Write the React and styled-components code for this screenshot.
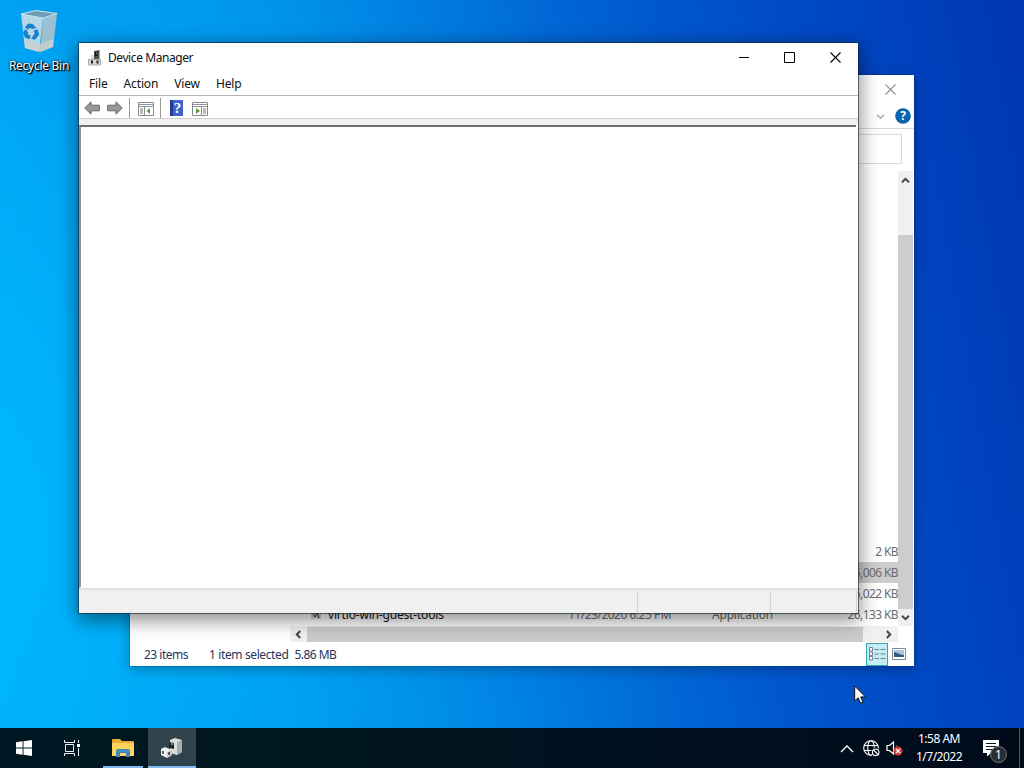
import React from 'react';
import styled, { createGlobalStyle } from 'styled-components';

const Global = createGlobalStyle`
  * { box-sizing: border-box; }
  body { margin: 0; overflow: hidden; font: 12px/16px "Noto Sans", "Open Sans", sans-serif; color: #111; }
  svg { display: block; flex: none; }
`;

const Desktop = styled.main`
  position: relative;
  width: 1024px;
  height: 768px;
  overflow: hidden;
  display: flex;
  flex-direction: column;
  justify-content: space-between;
  background:
    radial-gradient(ellipse 440px 540px at -40px 520px, rgba(0, 186, 255, .9), rgba(0, 180, 255, 0) 100%),
    linear-gradient(80deg, #00adf7 0%, #009ff1 14%, #009cf0 26%, #0095ec 35%, #007fe1 47%, #0067d5 59%, #0056cc 69%, #0045c1 85%, #0036b1 100%);
`;

const DesktopIcon = styled.div`
  width: 78px;
  padding-top: 8px;
  display: flex;
  flex-direction: column;
  align-items: center;
  gap: 4px;
`;

const IconLabel = styled.span`
  color: #fff;
  font-size: 12px;
  letter-spacing: -.27px;
  white-space: nowrap;
  text-shadow: 0 0 2px #000, 1px 1px 2px #000, 1px 1px 1px #000;
`;

const Window = styled.section`
  position: absolute;
  left: ${p => p.$x}px;
  top: ${p => p.$y}px;
  width: ${p => p.$w}px;
  height: ${p => p.$h}px;
  display: flex;
  flex-direction: column;
  background: #fff;
  box-shadow: ${p => p.$active ? '0 0 0 1px rgba(20,35,50,.62), 0 5px 18px 2px rgba(0,0,0,.46)' : '0 0 0 1px rgba(0,50,110,.25), 0 3px 12px rgba(0,0,0,.3)'};
`;

const TitleBar = styled.header`
  height: 30px;
  display: flex;
  align-items: flex-start;
  padding: 7px 0 0 8px;
  flex: none;
`;

const Title = styled.h1`
  flex: 1;
  margin: 0 0 0 5px;
  font-size: 12px;
  font-weight: 400;
  letter-spacing: -.42px;
`;

const CaptionButton = styled.span`
  width: ${p => p.$w || 46}px;
  height: ${p => p.$h || 15}px;
  padding-right: 1px;
  display: flex;
  align-items: center;
  justify-content: center;
`;

const CaptionGroup = styled.div`
  display: flex;
  margin-right: -1px;
`;

const MenuBar = styled.nav`
  height: 23px;
  flex: none;
  display: flex;
  padding: 3px 0 0 10px;
  gap: 16px;
  letter-spacing: -.15px;
  border-bottom: 1px solid #b4b4b4;
`;

const ToolBar = styled.div`
  height: 23px;
  flex: none;
  display: flex;
  align-items: center;
  padding: 2px 0 0 5px;
  border-bottom: 1px solid #cfcfcf;
`;

const Tool = styled.span`
  margin-right: ${p => p.$gap}px;
  padding-top: ${p => p.$drop || 0}px;
`;

const ToolRule = styled.span`
  width: 1px;
  height: 20px;
  margin-right: ${p => p.$gap}px;
  background: #9a9a9a;
`;

const Gutter = styled.div`
  height: 6px;
  flex: none;
  background: #f0f0f0;
`;

const Pane = styled.div`
  flex: 1;
  margin-right: 2px;
  border-top: 2px solid #6e6e6e;
  border-left: 2px solid #929292;
  border-bottom: 1px solid #fff;
  background: #fff;
`;

const PaneStatus = styled.footer`
  height: 25px;
  flex: none;
  display: flex;
  padding-top: 1px;
  background: #f0f0f0;
  border-top: 2px solid #e2e2e2;
`;

const StatusCell = styled.span`
  width: ${p => p.$w}px;
  border-right: 1px solid #d5d5d5;
`;

const ExplorerTitle = styled.header`
  height: 29px;
  flex: none;
  display: flex;
  justify-content: flex-end;
`;

const Ribbon = styled.div`
  height: 25px;
  flex: none;
  display: flex;
  align-items: center;
  justify-content: flex-end;
  gap: 10px;
  padding-right: 3px;
  border-bottom: 1px solid #d9d9d9;
`;

const SearchRow = styled.div`
  height: 42px;
  flex: none;
  display: flex;
  justify-content: flex-end;
  padding: 5px 12px 7px 0;
`;

const SearchBox = styled.span`
  width: 180px;
  height: 30px;
  border: 1px solid #d9d9d9;
`;

const Browser = styled.div`
  height: 471px;
  flex: none;
  display: flex;
`;

const TreePane = styled.aside`
  width: 160px;
  flex: none;
`;

const Listing = styled.div`
  flex: 1;
  min-width: 0;
  display: flex;
  flex-direction: column;
`;

const ListArea = styled.div`
  height: 455px;
  flex: none;
  display: flex;
`;

const Files = styled.div`
  flex: 1;
  display: flex;
  flex-direction: column;
  justify-content: flex-end;
  padding-bottom: 1px;
`;

const FileRow = styled.div`
  height: 21px;
  flex: none;
  display: grid;
  grid-template-columns: 20px 18px 240px 144px 119px 1fr;
  align-items: center;
  color: #6d6d6d;
  letter-spacing: -.5px;
  background: ${p => (p.$selected ? '#cdcdcd' : 'transparent')};
  white-space: nowrap;
`;

const FileName = styled.span`
  color: #111;
  letter-spacing: -.18px;
`;

const FileType = styled.span`
  letter-spacing: -.2px;
`;

const FileSize = styled.span`
  text-align: right;
  letter-spacing: -.6px;
`;

const VScroll = styled.div`
  width: 15px;
  margin-right: 1px;
  display: flex;
  flex-direction: column;
  align-items: center;
  background: #f0f0f0;
  padding-top: 5px;
`;

const VThumb = styled.span`
  width: 15px;
  height: 374px;
  margin: 50px 0 4px;
  background: #cdcdcd;
`;

const HScroll = styled.div`
  height: 16px;
  width: 608px;
  display: flex;
  align-items: center;
  padding-left: 4px;
  background: #f0f0f0;
`;

const HThumb = styled.span`
  width: 556px;
  height: 15px;
  margin: 0 21px 0 4px;
  background: #cbcbcb;
`;

const InfoBar = styled.footer`
  height: 24px;
  flex: none;
  display: flex;
  align-items: center;
  padding-left: 14px;
  color: #26365c;
`;

const Info = styled.span`
  margin-right: ${p => p.$gap}px;
  padding-top: 1px;
  white-space: nowrap;
  letter-spacing: ${p => p.$track}px;
`;

const ViewButtons = styled.span`
  margin-left: auto;
  display: flex;
  align-items: center;
  gap: 3px;
  padding-right: 8px;
`;

const ViewButton = styled.span`
  width: ${p => (p.$on ? 22 : 15)}px;
  height: ${p => (p.$on ? 23 : 13)}px;
  display: flex;
  align-items: center;
  justify-content: center;
  background: ${p => (p.$on ? '#c5ecf4' : 'none')};
  border: ${p => (p.$on ? '1px solid #35a5b3' : 0)};
`;

const TaskBar = styled.footer`
  height: 40px;
  display: flex;
  color: #fff;
  background: linear-gradient(90deg, #001823 0%, #00161f 35%, #000f1f 70%, #000b1a 100%);
`;

const Task = styled.span`
  width: ${p => p.$w || 48}px;
  margin-right: ${p => p.$gap || 0}px;
  padding: ${p => (p.$open ? 2 : 0)}px ${p => p.$nudge || 0}px 0 0;
  display: flex;
  align-items: center;
  justify-content: center;
  background: ${p => (p.$active ? '#2f434d' : 'none')};
  border-bottom: ${p => (p.$open ? '2px solid #80b9ed' : 0)};
`;

const Tray = styled.div`
  margin-left: auto;
  display: flex;
  align-items: center;
`;

const TrayItem = styled.span`
  margin-right: ${p => p.$gap}px;
`;

const Clock = styled.time`
  width: 56px;
  font-size: 12px;
  line-height: 18px;
  letter-spacing: -.5px;
  text-align: center;
  white-space: nowrap;
  margin-right: 16px;
  padding-bottom: 1px;
`;

const NoticeIcon = styled.span`
  position: relative;
  width: 26px;
  height: 24px;
  padding-top: 4px;
  margin-right: 10px;
`;

const Badge = styled.span`
  position: absolute;
  left: 7px;
  top: 10px;
  width: 17px;
  height: 17px;
  border-radius: 50%;
  border: 1px solid #74777a;
  background: #2b2e31;
  text-align: center;
  font-size: 12px;
  line-height: 15px;
`;

const DesktopEdge = styled.span`
  width: 5px;
  height: 40px;
  border-left: 1px solid #4a5663;
`;

const Pointer = styled.span`
  position: absolute;
  left: 854px;
  top: 685px;
`;

const BinIcon = () => (
  <svg width="40" height="46" viewBox="0 0 40 46">
    <path d="M2 6 24 10 20 44 6 40Z" fill="#b6d7e6" />
    <path d="M24 10 38 6 34 39 21 44Z" fill="#9cc0d2" />
    <path d="M2 6 17 2.500 38 5.500 24 10Z" fill="#6f9db5" stroke="#cfe6f0" strokeWidth="1" />
    <path d="M5 32 20 36 35 31 34 39 21 44 6 40Z" fill="#cfcfcc" opacity=".75" />
    <g transform="translate(-1 -2)">
      <g fill="none" stroke="#167fce" strokeWidth="4" strokeLinejoin="round">
        <path d="M8.500 22.500 11 19.500 15 20.500" /><path d="m17.500 24 1.500 4-3 4" /><path d="M12 31.500 8.500 30 7 26" />
      </g>
      <g fill="#167fce"><path d="m13.500 17.500 5 4.500-5 1Z" /><path d="m17 28.500-4 4 4 1.500Z" /><path d="m4.500 27 3-4 3 4Z" /></g>
    </g>
  </svg>
);

const DeviceIcon = () => (
  <svg width="16" height="16" viewBox="0 0 16 16">
    <path d="M7 1 12.500 0v9H7Z" fill="#505050" /><path d="M8 2h2.500v4H8Z" fill="#111" /><path d="M9 3h1v1H9Z" fill="#93ad94" />
    <path d="M4 5h3v5H4Z" fill="#ddd" />
    <path d="M1.500 9.500h12v5.500h-12Z" fill="#d6d6d6" stroke="#999" strokeWidth=".8" />
    <path d="M4 10.500h2v3H4ZM9.500 10.500h2v3h-2Z" fill="#222" />
  </svg>
);

const Arrow = ({ flip }) => (
  <svg width="16" height="14" viewBox="0 0 16 14">
    <path transform={flip ? 'translate(16 0) scale(-1 1)' : undefined} d="M.7 7 7 .8v3.400h8.300v5.600H7v3.400Z" fill="#989898" stroke="#686868" />
  </svg>
);

const PanelIcon = ({ right }) => (
  <svg width="16" height="14" viewBox="0 0 16 14">
    <path d="M.5.500h15v13H.5Z" fill="#fff" stroke="#858b91" />
    <path d="M1 2.500h14M1 4.500h14" stroke="#9298a0" />
    <path d={right ? 'M9.500 5v8' : 'M6.500 5v8'} stroke="#8b9096" />
    <path d={right ? 'M11 7h3M11 9h3M11 11h3' : 'M2 7h3M2 9h3M2 11h3'} stroke="#777" />
    <path d={right ? 'm4 6 4 3-4 3Z' : 'M12 6 8.500 9l3.500 3Z'} fill="#5b9f42" />
  </svg>
);

const HelpBook = () => (
  <svg width="13" height="16" viewBox="0 0 13 16">
    <path d="M0 0h13v16H0Z" fill="#3f63c8" /><path d="M0 0h3v16H0Z" fill="#263b98" />
    <text x="7.500" y="13" textAnchor="middle" fill="#fff" fontSize="15" fontFamily="Liberation Serif" fontWeight="700">?</text>
  </svg>
);

const HelpCircle = () => (
  <svg width="16" height="16" viewBox="0 0 16 16">
    <circle cx="8" cy="8" r="7.800" fill="#0865ad" />
    <text x="8" y="12.300" textAnchor="middle" fill="#fff" fontSize="12" fontFamily="Noto Sans" fontWeight="700">?</text>
  </svg>
);

const Cross = ({ color }) => <svg width="11" height="11" viewBox="0 0 11 11"><path d="m.5.500 10 10m0-10-10 10" stroke={color} strokeWidth="1.100" /></svg>;

const turns = { up: 0, right: 90, down: 180, left: 270 };
const Chevron = ({ dir, color = '#444', thin }) => (
  <svg width="9" height="9" viewBox="0 0 9 9">
    <path transform={`rotate(${turns[dir]} 4.500 4.500)`} d="m1 6.200 3.500-3.400L8 6.200" fill="none" stroke={color} strokeWidth={thin ? 1.4 : 2} />
  </svg>
);

const InstallerIcon = () => (
  <svg width="12" height="14" viewBox="0 0 12 14"><path d="M1 4h10v7H1Z" fill="#d5d5cd" /><path d="m3 6 2 3 2-4 2 5" fill="none" stroke="#292929" /></svg>
);

const DetailsIcon = () => (
  <svg width="17" height="14" viewBox="0 0 17 14" fill="none" stroke="#71828f">
    <path d="M.5.500h3v3.500h-3ZM.5 5h3v3.500h-3ZM.5 9.500h3V13h-3Z" fill="#f7ffff" /><path d="M5.500 2.500h4.500m1.500 0h5M5.500 7H10m1.500 0h5M5.500 11.500H10m1.500 0h5" />
  </svg>
);

const PreviewIcon = () => (
  <svg width="14" height="12" viewBox="0 0 14 12"><path d="M.5.500h13v11H.5Z" fill="#fff" stroke="#7c8a98" /><path d="M2 2h10v7H2Z" fill="#a8c6e3" /><path d="M2 4c3 0 5 3 10 3v2H2Z" fill="#385a7a" /></svg>
);

const StartIcon = () => (
  <svg width="16" height="16" viewBox="0 0 16 16" fill="#fff"><path d="M0 2.300 6.600 1.300v6.300H0ZM7.500 1.200 16 0v7.600H7.500ZM0 8.500h6.600v6.300L0 13.800ZM7.500 8.500H16V16l-8.500-1.200Z" /></svg>
);

const TaskViewIcon = () => (
  <svg width="17" height="16" viewBox="0 0 17 16" fill="none" stroke="#eef4f6">
    <path d="M2.500 4.500h8v7h-8ZM1.500 0v2.500h10V0M1.500 16v-2.500h10V16M15.500 0v3M15.500 8v8" /><path d="M14 4h3v3h-3Z" fill="#fff" stroke="none" />
  </svg>
);

const FolderIcon = () => (
  <svg width="22" height="18" viewBox="0 0 22 18">
    <path d="M0 1q0-1 1-1h7l2 2h11l1 1v14H0Z" fill="#e9ad35" /><path d="M0 4h22v13H0Z" fill="#ffd45e" />
    <path d="M4 18v-6q0-2 2-2h10q2 0 2 2v6h-4v-4H8v4Z" fill="#3c86b9" /><path d="M4 12h14" stroke="#509bc9" />
  </svg>
);

const DeviceTaskIcon = () => (
  <svg width="24" height="22" viewBox="0 0 24 22">
    <path d="m10 3 5-2 7 2v12l-5 3-7-2Z" fill="#dadcdd" /><path d="m17 5 5-2v12l-5 3Z" fill="#a8adb0" />
    <path d="m9 5 5 1v6l-5-1Z" fill="#202729" /><path d="M11 6h2v2h-2Z" fill="#6f9b79" />
    <path d="m1 12 4-2 7 3v5l-5 3-6-3Z" fill="#eeeeee" /><path d="m7 15 5-2v5l-5 3Z" fill="#c2c6c8" /><path d="M3 14v3M9 15v3" stroke="#333" strokeWidth="1.500" />
  </svg>
);

const GlobeIcon = () => (
  <svg width="17" height="17" viewBox="0 0 17 17" fill="none" stroke="#fff" strokeWidth="1.100">
    <circle cx="8" cy="8" r="7.300" /><ellipse cx="8" cy="8" rx="3.300" ry="7.300" /><path d="M1 5.500h14M1 10.500h14" />
    <circle cx="12.700" cy="12.300" r="4.700" fill="#000f1f" stroke="none" /><circle cx="12.700" cy="12.300" r="3.300" /><path d="m10.500 10 4.500 4.500" />
  </svg>
);

const MutedIcon = () => (
  <svg width="17" height="16" viewBox="0 0 17 16">
    <path d="M1 5.500h2.500L7.500 2v12l-4-3.500H1Z" fill="none" stroke="#fff" strokeWidth="1.200" /><path d="M10 5q1 1 1 3" stroke="#777" fill="none" />
    <circle cx="12" cy="11" r="4.500" fill="#d33b3b" /><path d="m10 9 4 4m0-4-4 4" stroke="#fff" strokeWidth="1.200" />
  </svg>
);

const MessageIcon = () => (
  <svg width="17" height="17" viewBox="0 0 17 17"><path d="M0 0h16v13H8l-4 3.500V13H0Z" fill="#fff" /><path d="M3 3.500h10M3 6.500h10M3 9.500h7" stroke="#07131f" /></svg>
);

const PointerIcon = () => (
  <svg width="12" height="20" viewBox="0 0 12 20"><path d="M.7 1v15l3.500-3.300 2.300 5.500 2.500-1-2.300-5.300h4.700Z" fill="#fff" stroke="#111" strokeWidth="1" /></svg>
);

const files = [
  { size: '2 KB' },
  { size: '6,006 KB', selected: true },
  { size: '6,022 KB' },
  { name: 'virtio-win-guest-tools', date: '11/23/2020 6:25 PM', type: 'Application', size: '26,133 KB' },
];

function Explorer() {
  return (
    <Window $x={130} $y={75} $w={784} $h={591}>
      <ExplorerTitle><CaptionButton $h={29}><Cross color="#929292" /></CaptionButton></ExplorerTitle>
      <Ribbon><Chevron dir="down" color="#aaa" thin /><HelpCircle /></Ribbon>
      <SearchRow><SearchBox /></SearchRow>
      <Browser>
        <TreePane />
        <Listing>
          <ListArea>
            <Files>
              {files.map(f => (
                <FileRow key={f.size} $selected={f.selected}>
                  <span />{f.name ? <InstallerIcon /> : <span />}
                  <FileName>{f.name}</FileName><span>{f.date}</span><FileType>{f.type}</FileType><FileSize>{f.size}</FileSize>
                </FileRow>
              ))}
            </Files>
            <VScroll><Chevron dir="up" /><VThumb /><Chevron dir="down" /></VScroll>
          </ListArea>
          <HScroll><Chevron dir="left" /><HThumb /><Chevron dir="right" /></HScroll>
        </Listing>
      </Browser>
      <InfoBar>
        <Info $gap={21} $track={-.5}>23 items</Info>
        <Info $gap={6} $track={-.38}>1 item selected</Info>
        <Info $gap={0} $track={-.55}>5.86 MB</Info>
        <ViewButtons><ViewButton $on><DetailsIcon /></ViewButton><ViewButton><PreviewIcon /></ViewButton></ViewButtons>
      </InfoBar>
    </Window>
  );
}

function DeviceManager() {
  return (
    <Window $x={79} $y={43} $w={779} $h={570} $active>
      <TitleBar>
        <DeviceIcon /><Title>Device Manager</Title>
        <CaptionGroup>
          <CaptionButton $w={45}><svg width="11" height="11"><path d="M0 5.500h10" stroke="#000" /></svg></CaptionButton>
          <CaptionButton><svg width="11" height="11"><path d="M.5.500h10v10H.5Z" fill="none" stroke="#000" /></svg></CaptionButton>
          <CaptionButton><Cross color="#000" /></CaptionButton>
        </CaptionGroup>
      </TitleBar>
      <MenuBar>{['File', 'Action', 'View', 'Help'].map(m => <span key={m}>{m}</span>)}</MenuBar>
      <ToolBar>
        <Tool $gap={7}><Arrow /></Tool><Tool $gap={6}><Arrow flip /></Tool><ToolRule $gap={8} />
        <Tool $gap={6} $drop={2}><PanelIcon /></Tool><ToolRule $gap={9} />
        <Tool $gap={9}><HelpBook /></Tool><Tool $gap={0} $drop={2}><PanelIcon right /></Tool>
      </ToolBar>
      <Gutter />
      <Pane />
      <PaneStatus><StatusCell $w={559} /><StatusCell $w={133} /><StatusCell $w={86} /></PaneStatus>
    </Window>
  );
}

export default function App() {
  return (
    <>
      <Global />
      <Desktop>
        <DesktopIcon><BinIcon /><IconLabel>Recycle Bin</IconLabel></DesktopIcon>
        <Explorer />
        <DeviceManager />
        <TaskBar>
          <Task><StartIcon /></Task>
          <Task $gap={7} $nudge={2}><TaskViewIcon /></Task>
          <Task $w={40} $gap={5} $open><FolderIcon /></Task>
          <Task $open $active><DeviceTaskIcon /></Task>
          <Tray>
            <TrayItem $gap={9}><svg width="14" height="9" viewBox="0 0 14 9"><path d="m1 8 6-6 6 6" fill="none" stroke="#fff" strokeWidth="1.300" /></svg></TrayItem>
            <TrayItem $gap={6}><GlobeIcon /></TrayItem>
            <TrayItem $gap={8}><MutedIcon /></TrayItem>
            <Clock>1:58 AM<br />1/7/2022</Clock>
            <NoticeIcon><MessageIcon /><Badge>1</Badge></NoticeIcon>
            <DesktopEdge />
          </Tray>
        </TaskBar>
        <Pointer><PointerIcon /></Pointer>
      </Desktop>
    </>
  );
}
